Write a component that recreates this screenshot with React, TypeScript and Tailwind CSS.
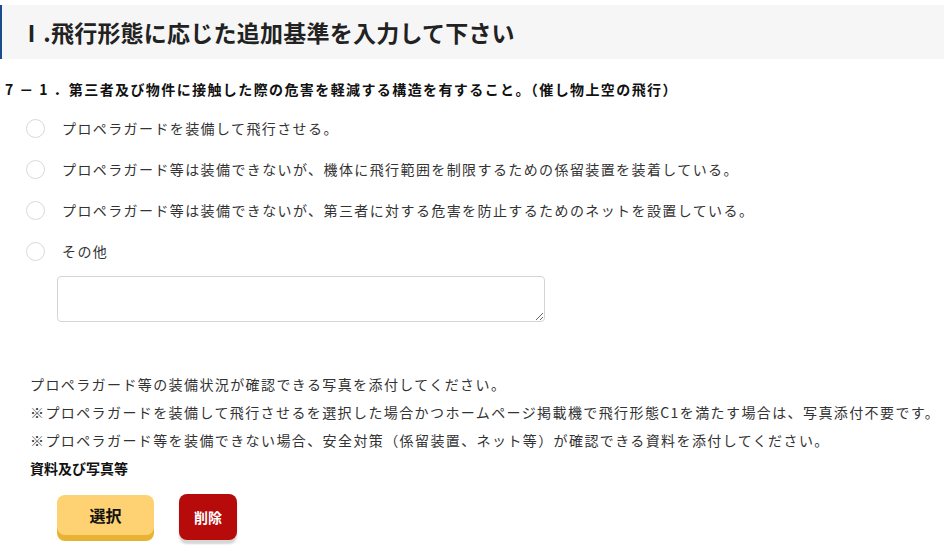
import React from "react";

const font = { fontFamily: '"Noto Sans CJK JP", "Noto Sans", sans-serif' };

const options = [
  "プロペラガードを装備して飛行させる。",
  "プロペラガード等は装備できないが、機体に飛行範囲を制限するための係留装置を装着している。",
  "プロペラガード等は装備できないが、第三者に対する危害を防止するためのネットを設置している。",
  "その他",
];

export default function App() {
  return (
    <div className="w-[944px] h-[546px] bg-white overflow-hidden text-[#333]" style={font}>
      <div className="mt-[5px] h-[54px] bg-[#f6f6f6] border-l-2 border-[#1b4b8c] flex items-center pl-[18px]">
        <h1 className="text-[23px] font-bold text-[#222] tracking-[0.01em]">Ⅰ.飛行形態に応じた追加基準を入力して下さい</h1>
      </div>
      <div className="mt-[20px] pl-[5px] h-[20px] flex items-center text-[14px] font-bold text-[#111] tracking-[0.1em] leading-[20px] whitespace-nowrap">
        7 － 1 ．第三者及び物件に接触した際の危害を軽減する構造を有すること。（催し物上空の飛行）
      </div>
      <div className="mt-[9px] pl-[26px]">
        {options.map((o) => (
          <div key={o} className="h-[41px] flex items-center">
            <span className="w-[19px] h-[19px] rounded-full border border-[#d9d9d9] bg-white shrink-0" />
            <span className="ml-[17px] text-[14px] tracking-[0.1em] text-[#333]">{o}</span>
          </div>
        ))}
      </div>
      <div className="pl-[57px] mt-[4px]">
        <textarea className="block w-[488px] h-[46px] border border-[#d4d4d4] rounded-[4px] bg-white" />
      </div>
      <div className="mt-[48px] pl-[30px] text-[14px] leading-[28px] tracking-[0.1em] text-[#333]">
        <p>プロペラガード等の装備状況が確認できる写真を添付してください。</p>
        <p className="whitespace-nowrap">※プロペラガードを装備して飛行させるを選択した場合かつホームページ掲載機で飛行形態C1を満たす場合は、写真添付不要です。</p>
        <p>※プロペラガード等を装備できない場合、安全対策（係留装置、ネット等）が確認できる資料を添付してください。</p>
        <p className="font-bold text-[#111] tracking-normal">資料及び写真等</p>
      </div>
      <div className="mt-[12px] pl-[57px] flex items-start gap-[25px]">
        <button className="mt-[1px] w-[97px] h-[40px] rounded-[8px] bg-[#fed272] shadow-[0_6px_0_#e8b235] text-[16px] font-bold text-[#111]">
          選択
        </button>
        <button className="w-[58px] h-[46px] rounded-[8px] bg-[#b70b0b] shadow-[0_4px_2px_#d6d6d6] text-[14px] font-bold text-white">
          削除
        </button>
      </div>
    </div>
  );
}
